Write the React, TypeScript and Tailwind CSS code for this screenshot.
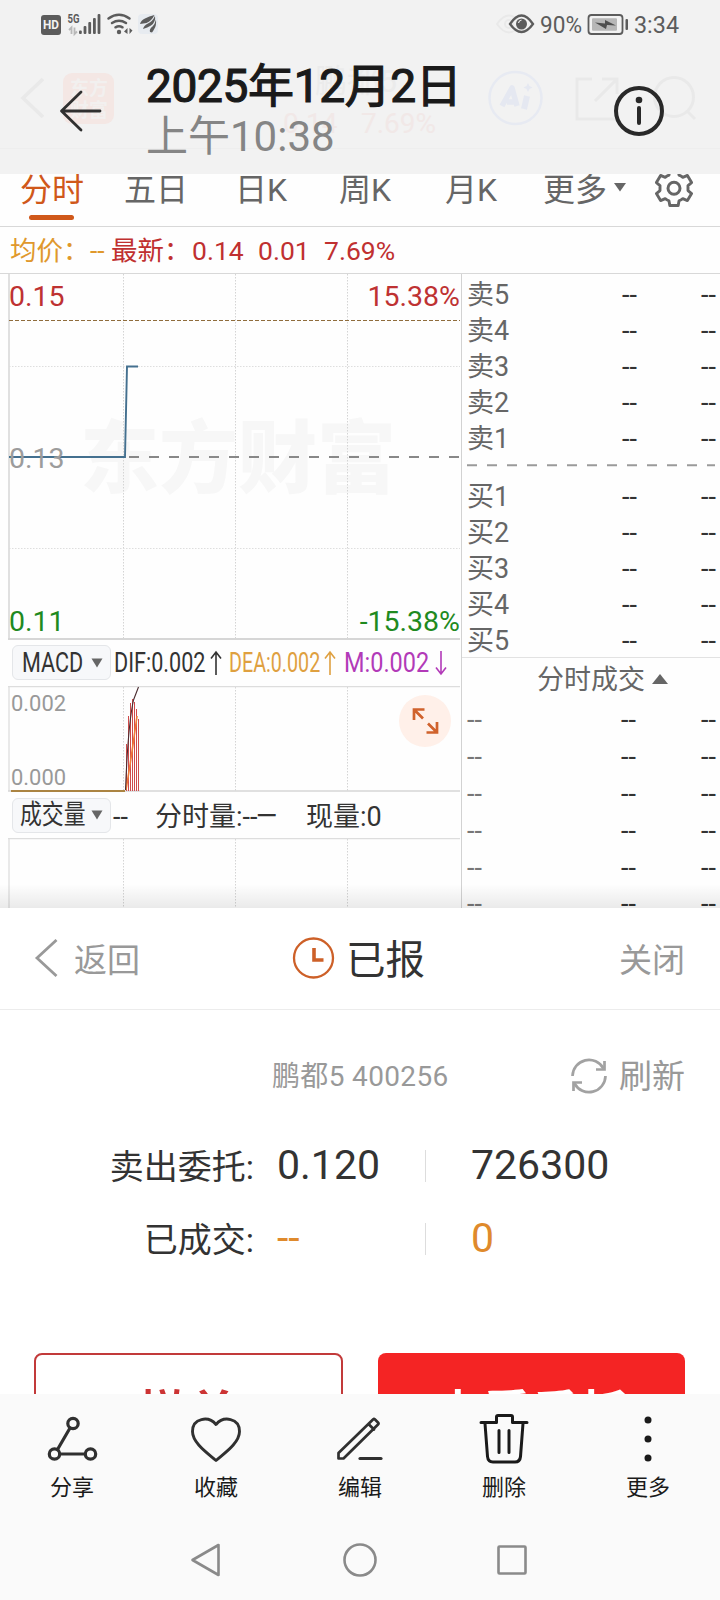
import React from "react";

const TABS = [
  { label: "分时", cls: "w-[104px] text-[#d0581a]" },
  { label: "五日", cls: "w-[111px]" },
  { label: "日K", cls: "w-[104px]" },
  { label: "周K", cls: "w-[106px]" },
  { label: "月K", cls: "w-[98px]" },
];
const SELLS = ["卖5", "卖4", "卖3", "卖2", "卖1"];
const BUYS = ["买1", "买2", "买3", "买4", "买5"];
const GRID_X = [123.5, 235.5, 347.5];

function StatusBar() {
  return (
    <div className="flex h-12 items-center">
      <svg className="ml-10 h-12 w-[120px]" viewBox="40 0 120 48">
        <rect x="41" y="15" width="20" height="20" rx="3" fill="#5c5c5c" />
        <text x="51" y="29.2" textAnchor="middle" fontSize="12" fontWeight="700" fill="#f2f2f2" textLength="16" lengthAdjust="spacingAndGlyphs">HD</text>
        <text x="67.5" y="23" fontSize="13" fontWeight="700" fill="#5c5c5c" textLength="12" lengthAdjust="spacingAndGlyphs">5G</text>
        <path d="M71.500 34v-6.500l-2.500 2.500M74.500 27.500v6.500l2.500-2.500" fill="none" stroke="#b9b9b9" strokeWidth="1.800" />
        <g fill="#5c5c5c">
          <rect x="79" y="30.500" width="2.800" height="3.500" rx="1" />
          <rect x="83.600" y="26" width="2.800" height="8" rx="1" />
          <rect x="88.300" y="22" width="2.800" height="12" rx="1" />
          <rect x="93" y="18" width="2.800" height="16" rx="1" />
          <rect x="97.600" y="14" width="2.800" height="20" rx="1" />
        </g>
        <g fill="none" stroke="#5c5c5c" strokeWidth="2.500" strokeLinecap="round">
          <path d="M108.500 18.500q10.500-7.500 21 0" />
          <path d="M112 23q7-4.500 14 0" />
          <path d="M115.500 27.300q3.500-2 7 0" />
        </g>
        <circle cx="119" cy="32" r="2.200" fill="#5c5c5c" />
        <path d="M127.500 28v6l-3.500-2.500zM129.500 34v-6l3 2.500z" fill="#5c5c5c" />
        <rect x="138" y="14" width="20" height="20" rx="4" fill="#e7ebf0" />
        <path d="M140 24q1-4 5-5.500q4-2.500 9.500-3.500q-3 6-8 8q-3 .5-6.500 1zM143 29q1-4 5-5.500q4.500-2 7-7.500q1 6-4 9.500q-3.500 2-8 3.500zM150 32q-1-3 2.500-5.500q2.500-2.500 3.500-7q.5 6-1.500 9q-1 2-2.500 4z" fill="#5c5c5c" />
      </svg>
      <svg className="ml-auto mr-10 h-12 w-[190px]" viewBox="490 0 190 48">
        <g fill="none" stroke="#e9e9e9" strokeWidth="2">
          <path d="M497 24q12-17 24 0q-12 17-24 0z" />
          <circle cx="509" cy="24" r="4" />
        </g>
        <path d="M510 24q11.500-17 23 0q-11.500 16-23 0z" fill="none" stroke="#5c5c5c" strokeWidth="2.300" />
        <circle cx="521.500" cy="24" r="5.500" fill="#5c5c5c" />
        <path d="M518.500 23q.5-2.500 3-3" fill="none" stroke="#f2f2f2" strokeWidth="1.200" />
        <text x="540" y="32.500" fontSize="23" fill="#5c5c5c" textLength="42" lengthAdjust="spacingAndGlyphs">90%</text>
        <rect x="588.500" y="15" width="34" height="19" rx="3" fill="none" stroke="#5c5c5c" strokeWidth="1.800" />
        <rect x="592" y="18.300" width="25" height="12.500" rx="1" fill="#b7b7b7" />
        <path d="M595 22.500l10 1v-3.500l11 5.500l-9-.5l-1 4z" fill="#4e4e4e" />
        <rect x="625.500" y="19" width="2.500" height="11" rx="1" fill="#5c5c5c" />
        <text x="634" y="32.500" fontSize="23" fill="#5c5c5c" textLength="45" lengthAdjust="spacingAndGlyphs">3:34</text>
      </svg>
    </div>
  );
}

function FadedAppBar() {
  return (
    <svg className="absolute left-0 top-0 h-[174px] w-[720px]" viewBox="0 0 720 174">
      <path d="M43 79L23 98l20 19" fill="none" stroke="#e9e9e9" strokeWidth="3.500" />
      <rect x="63" y="73" width="51" height="51" rx="9" fill="#f4e7e4" />
      <g fill="#f2f0ef" fontSize="19" fontWeight="700">
        <text x="70" y="95">东方</text>
        <text x="70" y="117">财富</text>
      </g>
      <text x="315" y="92" fontSize="32" fill="#ebebeb">鹏都5</text>
      <text x="283" y="133" fontSize="28" fill="#f1e8e7">0.14</text>
      <text x="361" y="133" fontSize="28" fill="#f1e8e7">7.69%</text>
      <circle cx="515.500" cy="98" r="26" fill="none" stroke="#e7eaf2" strokeWidth="2.500" />
      <g fill="none" stroke="#e5e8f1" strokeLinejoin="round">
        <path d="M502 106L512 88L517 106M507 102h9" strokeWidth="5.500" />
        <path d="M527 96l-3 13" strokeWidth="6" />
      </g>
      <path d="M528 83l1.500 3l3 1.500l-3 1.500l-1.500 3l-1.500-3l-3-1.500l3-1.500z" fill="#e5e8f1" />
      <g fill="none" stroke="#e9e9e9" strokeWidth="3">
        <path d="M592 79h-15v40h40v-19M602 79h15v15M617 79l-22 22" />
        <circle cx="674" cy="97" r="19.500" />
        <path d="M687 111l8 8" />
      </g>
      <path d="M0 148.500h720" stroke="#eeeeee" />
    </svg>
  );
}

function Header() {
  return (
    <header className="relative h-[174px] shrink-0 bg-[#f2f2f2]">
      <FadedAppBar />
      <div className="relative">
        <StatusBar />
        <div className="flex">
          <svg className="ml-[58px] mt-10 h-[46px] w-[46px]" viewBox="58 88 46 46">
            <path d="M81 92L61.500 111L81 130M62 111h38" fill="none" stroke="#303030" strokeWidth="2.800" strokeLinecap="round" strokeLinejoin="round" />
          </svg>
          <div className="ml-[42px] flex w-[330px] flex-col whitespace-nowrap">
            <h1 className="mt-[13px] h-[50px] text-[46px] font-normal leading-[50px] tracking-[-0.35px] text-[#1a1a1a] [-webkit-text-stroke:1.200px_#1a1a1a]">2025年12月2日</h1>
            <p className="h-[50px] pt-px text-[42px] leading-[50px] text-[#858585]">上午10:38</p>
          </div>
          <svg className="ml-[137px] mt-[37px] h-[52px] w-[52px]" viewBox="613 85 52 52">
            <circle cx="639" cy="111" r="23" fill="none" stroke="#292929" strokeWidth="4" />
            <circle cx="639" cy="100" r="3.300" fill="#292929" />
            <path d="M639 108v15" stroke="#292929" strokeWidth="4" strokeLinecap="round" />
          </svg>
        </div>
      </div>
    </header>
  );
}

function GearIcon() {
  return (
    <svg className="h-[44px] w-[44px]" viewBox="652.500 165.500 44 44">
      <path
        d="M670.300 170h8.400l.8 4.600q2 .8 3.800 2.200l4.600-1.900l4.200 7.200l-3.600 3v5l3.600 3l-4.200 7l-4.600-1.900q-1.800 1.400-3.800 2.200l-.8 4.600h-8.400l-.8-4.600q-2-.8-3.800-2.200l-4.600 1.900l-4.200-7l3.600-3v-5l-3.600-3l4.200-7.200l4.600 1.900q1.800-1.400 3.800-2.200z"
        fill="none" stroke="#666666" strokeWidth="2.900" strokeLinejoin="round"
      />
      <circle cx="674.500" cy="187.800" r="6" fill="none" stroke="#666666" strokeWidth="3" />
    </svg>
  );
}

function Tabs() {
  return (
    <nav className="h-[53px] shrink-0 border-b border-[#d8d8d8] pl-5">
      <div className="flex h-[41px] items-start text-[32px] leading-[32px] text-[#666666]">
        {TABS.map((t) => (
          <span key={t.label} className={"shrink-0 " + t.cls}>{t.label}</span>
        ))}
        <span className="w-[71px]">更多</span>
        <svg className="mt-2 h-[10px] w-[12px]" viewBox="0 0 12 10"><path d="M0 1h12L6 9.500z" fill="#666666" /></svg>
        <div className="-mt-2 ml-[26px]"><GearIcon /></div>
      </div>
      <div className="ml-[9px] h-[5px] w-[45px] rounded-full bg-[#d0581a]" />
    </nav>
  );
}

function QuoteRow() {
  return (
    <div className="flex h-[47px] shrink-0 items-center whitespace-pre border-b border-[#d8d8d8] pl-[10px] pt-px text-[26.5px] leading-[46px] text-[#c03030]">
      <span className="w-[80px] text-[#e0982c]">均价：</span>
      <span className="w-[21px] text-[#e0982c]">--</span>
      <span className="w-[81px]">最新：</span>
      <span className="w-[66px]">0.14</span>
      <span className="w-[66px]">0.01</span>
      <span>7.69%</span>
    </div>
  );
}

function VerticalGrid({ y1, y2 }: { y1: number; y2: number }) {
  return (
    <g stroke="#d4d4d4" strokeWidth="1" strokeDasharray="1.500 1.500">
      {GRID_X.map((x) => (
        <path key={x} d={`M${x} ${y1}V${y2}`} />
      ))}
    </g>
  );
}

function PriceChart() {
  return (
    <svg className="h-[366px] w-[461px] shrink-0" viewBox="0 274 461 366">
      <text x="80" y="487" fontSize="79" fontWeight="900" fill="#f7f7f7">东方财富</text>
      <VerticalGrid y1={274} y2={639} />
      <path d="M9 366.500H460M9 548.500H460" stroke="#dedede" strokeDasharray="1.500 1.500" />
      <path d="M9 274V639" stroke="#dddddd" strokeWidth="1.800" />
      <path d="M8 639H460" stroke="#d6d6d6" strokeWidth="2" />
      <path d="M9 320.500H460" stroke="#8f6c3c" strokeWidth="1" strokeDasharray="4 2" />
      <path d="M129 457H460" stroke="#888888" strokeWidth="1.800" strokeDasharray="10 10" />
      <path d="M9 457H125L127 366.500H138" fill="none" stroke="#44708f" strokeWidth="1.900" />
      <g fontSize="28.500">
        <text x="9" y="306" fill="#be3232">0.15</text>
        <text x="460" y="306" textAnchor="end" fill="#be3232">15.38%</text>
        <text x="9" y="467.500" fill="#9c9c9c">0.13</text>
        <text x="9" y="630.700" fill="#1f8a1f">0.11</text>
        <text x="460" y="630.700" textAnchor="end" fill="#1f8a1f">-15.38%</text>
      </g>
    </svg>
  );
}

function Pill({ label, cls }: { label: string; cls: string }) {
  return (
    <div className="ml-3 flex h-[35px] w-[99px] shrink-0 items-center rounded-md border border-[#e4e6e9] bg-[#f7f8fa]">
      <span className="w-[78px] whitespace-nowrap"><span className={"inline-block origin-left " + cls}>{label}</span></span>
      <svg className="h-[10px] w-[12px] shrink-0" viewBox="0 0 12 10"><path d="M.5 .5h11L6 9.500z" fill="#666666" /></svg>
    </div>
  );
}

function Arrow({ down }: { down?: boolean }) {
  return (
    <svg className={"h-[26px] w-[12px] shrink-0 " + (down ? "rotate-180" : "")} viewBox="0 0 12 26">
      <path d="M6 25V2M1 8.500L6 2l5 6.500" fill="none" stroke="currentColor" strokeWidth="1.600" />
    </svg>
  );
}

function MacdRow() {
  return (
    <div className="flex h-[46px] shrink-0 items-center whitespace-nowrap pb-px text-[27px] leading-[34px] text-[#333333]">
      <Pill label="MACD" cls="ml-[9px] scale-x-[0.8]" />
      <span className="ml-[3px] w-[96px] shrink-0"><span className="inline-block origin-left scale-x-[0.8]">DIF:0.002</span></span>
      <Arrow />
      <span className="ml-[7px] flex shrink-0 items-center text-[#dfa040]">
        <span className="w-[95px]"><span className="inline-block origin-left scale-x-[0.73]">DEA:0.002</span></span>
        <Arrow />
      </span>
      <span className="ml-[8px] flex shrink-0 items-center text-[#b23ab8]">
        <span className="w-[91px]"><span className="inline-block origin-left scale-x-[0.87]">M:0.002</span></span>
        <Arrow down />
      </span>
    </div>
  );
}

function MacdChart() {
  return (
    <svg className="h-[106px] w-[461px] shrink-0" viewBox="0 686 461 106">
      <VerticalGrid y1={687} y2={791} />
      <path d="M8 686.500H460M9 686V791" stroke="#dddddd" strokeWidth="1.300" />
      <path d="M8 791H460" stroke="#d6d6d6" strokeWidth="1.600" />
      <path d="M11 791H125" stroke="#ab8442" strokeWidth="2" />
      <path d="M126.500 791V744M128.500 791V716M130.500 791V703M132.500 791V699M134.500 791V702M136.500 791V709M138.500 791V719" stroke="#cf4a4a" strokeWidth="1" />
      <path d="M126 790Q131 760 137 716" fill="none" stroke="#f07a38" strokeWidth="1.600" />
      <path d="M125.500 790Q128 725 133.500 700L138.500 687" fill="none" stroke="#4a2c30" strokeWidth="1.100" />
      <g fontSize="22.500" fill="#999999">
        <text x="11" y="711" textLength="55" lengthAdjust="spacingAndGlyphs">0.002</text>
        <text x="11" y="785" textLength="55" lengthAdjust="spacingAndGlyphs">0.000</text>
      </g>
      <circle cx="425" cy="721" r="26" fill="#fff0e9" />
      <path d="M414 720V709.500H424.500M414 709.500L423 718.500M437 722V732.500H426.500M437 732.500L428 723.500" fill="none" stroke="#d0622c" strokeWidth="2.700" />
    </svg>
  );
}

function VolumeRow() {
  return (
    <div className="flex h-[46px] shrink-0 items-center whitespace-nowrap text-[27px] leading-[34px] text-[#333333]">
      <Pill label="成交量" cls="ml-[7px] scale-x-[0.81]" />
      <span className="ml-[2px] w-[42px] shrink-0 pt-[3px]">--</span>
      <span className="w-[151px] shrink-0 pt-[3px]">分时量:--<span className="inline-block origin-left scale-x-[0.72]">一</span></span>
      <span className="pt-[3px]">现量:0</span>
    </div>
  );
}

function BookRow({ label }: { label: string }) {
  return (
    <div className="flex h-9 shrink-0 items-center pl-[5px] text-[27px] leading-9 text-[#666666]">
      <span className="w-[155px]">{label}</span>
      <span className="w-[79px] text-[#333333]">--</span>
      <span className="text-[#333333]">--</span>
    </div>
  );
}

function OrderBook() {
  return (
    <section className="flex h-[634px] w-[259px] flex-col overflow-hidden border-l border-[#d2d2d2]">
      <div className="flex h-[384px] shrink-0 flex-col border-b border-[#e2e2e2] pt-[3px]">
        {SELLS.map((l) => <BookRow key={l} label={l} />)}
        <svg className="h-[22px] w-[258px] shrink-0" viewBox="462 457 258 22">
          <path d="M467 465.300H715" stroke="#9a9a9a" strokeWidth="2" strokeDasharray="10 10" />
        </svg>
        {BUYS.map((l) => <BookRow key={l} label={l} />)}
      </div>
      <div className="flex h-[44px] shrink-0 items-center pl-[75px] pt-px text-[27px] leading-[43px] text-[#666666]">
        <span className="w-[115px]">分时成交</span>
        <svg className="-mt-1 h-[10px] w-[16px]" viewBox="0 0 16 10"><path d="M0 10L8 0l8 10z" fill="#666666" /></svg>
      </div>
      {[0, 1, 2, 3, 4, 5].map((i) => (
        <div key={i} className="flex h-[36.8px] shrink-0 items-center pl-[5px] text-[27px] leading-[36px] text-[#777777]">
          <span className="w-[154px]">--</span>
          <span className="w-[80px] text-[#333333]">--</span>
          <span className="text-[#333333]">--</span>
        </div>
      ))}
    </section>
  );
}

function Market() {
  return (
    <main className="relative flex h-[634px] shrink-0">
      <div className="flex w-[461px] flex-col">
        <PriceChart />
        <MacdRow />
        <MacdChart />
        <VolumeRow />
        <svg className="h-[70px] w-[461px]" viewBox="0 838 461 70">
          <VerticalGrid y1={839} y2={908} />
          <path d="M8 838.500H460M9 838V908" stroke="#dddddd" strokeWidth="1.300" />
        </svg>
      </div>
      <OrderBook />
      <div className="absolute bottom-0 left-0 h-6 w-full bg-linear-to-b from-transparent to-black/8" />
    </main>
  );
}

function OrderSheet() {
  return (
    <section className="flex h-[486px] shrink-0 flex-col overflow-hidden bg-white">
      <div className="flex h-[102px] shrink-0 items-center border-b border-[#ececec] text-[33px] leading-[60px] text-[#999999]">
        <svg className="ml-[33px] h-10 w-[26px]" viewBox="33 939 26 40">
          <path d="M56.500 940L37 958l19.500 18" fill="none" stroke="#999999" strokeWidth="2.800" />
        </svg>
        <span className="ml-[15px] mt-1 w-[218px]">返回</span>
        <svg className="-mt-0.5 h-[44px] w-[44px]" viewBox="0 0 44 44">
          <circle cx="21.500" cy="22" r="19.500" fill="none" stroke="#cd6028" strokeWidth="2.300" />
          <path d="M22 12v12h9.500" fill="none" stroke="#cd6028" strokeWidth="3.600" />
        </svg>
        <span className="ml-[10px] mt-[5px] w-[273px] text-[39.500px] text-[#333333]">已报</span>
        <span className="mt-1">关闭</span>
      </div>
      <div className="mt-9 flex h-[60px] shrink-0 items-center pt-px text-[#999999]">
        <span className="ml-[272px] w-[297px] whitespace-nowrap text-[28px] leading-[60px] tracking-[0.35px]">鹏都5 400256</span>
        <svg className="-mt-0.5 h-10 w-10" viewBox="0 0 40 40">
          <g fill="none" stroke="#a2a2a2" strokeWidth="2.700">
            <path d="M3.500 20A16.500 16.500 0 0 1 34.500 12.500M36.500 20A16.500 16.500 0 0 1 5.500 27.500" />
            <path d="M35.500 5v8.500h-8.500M4.500 35v-8.500h8.500" />
          </g>
        </svg>
        <span className="ml-[10px] whitespace-nowrap text-[33px] leading-[60px]">刷新</span>
      </div>
      <div className="mt-[23px] flex h-[73px] shrink-0 items-center text-[41px] leading-[73px] text-[#333333]">
        <span className="mt-[3px] w-[254px] whitespace-nowrap text-right text-[34px]">卖出委托:</span>
        <span className="ml-[23px] w-[148px]">0.120</span>
        <span className="h-8 w-px bg-[#dddddd]" />
        <span className="ml-[45px]">726300</span>
      </div>
      <div className="flex h-[73px] shrink-0 items-center text-[41px] leading-[73px] text-[#df8a2c]">
        <span className="mt-[3px] w-[254px] whitespace-nowrap text-right text-[34px] text-[#333333]">已成交:</span>
        <span className="ml-[23px] w-[148px]">--</span>
        <span className="h-8 w-px bg-[#dddddd]" />
        <span className="ml-[45px]">0</span>
      </div>
      <div className="mt-[78px] flex h-[110px] shrink-0 text-center text-[49px] font-bold leading-[100px]">
        <div className="ml-[34px] w-[309px] rounded-lg border-2 border-[#c23a3a] pt-[10px] text-[#cc3333]">撤单</div>
        <div className="ml-[35px] w-[307px] rounded-lg bg-[#f42424] pt-[12px] text-white">查看委托</div>
      </div>
    </section>
  );
}

const ACTIONS = [
  {
    label: "分享",
    icon: (
      <g strokeWidth="3.200">
        <circle cx="31" cy="12.500" r="5.200" /><circle cx="12.500" cy="43" r="5.200" /><circle cx="48.500" cy="43" r="5.200" />
        <path d="M28 17L15.500 38.500M18 43h25" />
      </g>
    ),
  },
  {
    label: "收藏",
    icon: <path strokeWidth="2.900" d="M30 49.500C22 42.500 6.500 32 6.500 20.500C6.500 7 22.500 4.500 30 13.500C37.500 4.500 53.500 7 53.500 20.500C53.500 32 38 42.500 30 49.500z" />,
  },
  {
    label: "编辑",
    icon: (
      <g strokeWidth="2.700">
        <path d="M8.500 47.500v-5.500L43 8.500q1-1 2 0l3 3q1 1 0 2L13.500 47.500zM38.500 13l5.500 5.500" />
        <path d="M30 47.500h21" strokeWidth="3.200" />
      </g>
    ),
  },
  {
    label: "删除",
    icon: (
      <g strokeWidth="3" stroke="#1a1a1a">
        <path d="M7 11.500h15.500V6q0-1.500 1.500-1.500h13q1.500 0 1.500 1.500v5.500H53M11 12.500l2.500 33q.5 5.500 5.500 5.500h22q5 0 5.500-5.500l2.500-33M25 19.500v22M35 19.500v22" />
      </g>
    ),
  },
  {
    label: "更多",
    icon: (
      <g fill="#1a1a1a" stroke="none">
        <circle cx="30" cy="9" r="3.500" /><circle cx="30" cy="28" r="3.500" /><circle cx="30" cy="47" r="3.500" />
      </g>
    ),
  },
];

function BottomBar() {
  return (
    <footer className="h-[206px] shrink-0 bg-[#fafafa]">
      <div className="grid h-[126px] grid-cols-5 pt-[18px]">
        {ACTIONS.map((a) => (
          <div key={a.label} className="flex flex-col items-center">
            <svg className="h-[60px] w-[60px] shrink-0" viewBox="0 1 60 60" fill="none" stroke="#303030" strokeLinecap="round" strokeLinejoin="round">{a.icon}</svg>
            <span className="mt-px text-[22px] leading-[30px] text-[#1a1a1a]">{a.label}</span>
          </div>
        ))}
      </div>
      <div className="flex h-20 justify-center">
        <svg className="h-20 w-[344px]" viewBox="188 1520 344 80" fill="none" stroke="#8a8a8a" strokeWidth="2.600" strokeLinejoin="round">
          <path d="M192.500 1560L218.500 1545v30z" />
          <circle cx="360" cy="1560" r="15.500" />
          <rect x="498.500" y="1546.500" width="27" height="27" rx="1" />
        </svg>
      </div>
    </footer>
  );
}

export default function App() {
  return (
    <div className="flex h-[1600px] w-[720px] flex-col overflow-hidden bg-[#fefefe] font-[Roboto,'Noto_Sans_CJK_SC',sans-serif]">
      <Header />
      <Tabs />
      <QuoteRow />
      <Market />
      <OrderSheet />
      <BottomBar />
    </div>
  );
}
